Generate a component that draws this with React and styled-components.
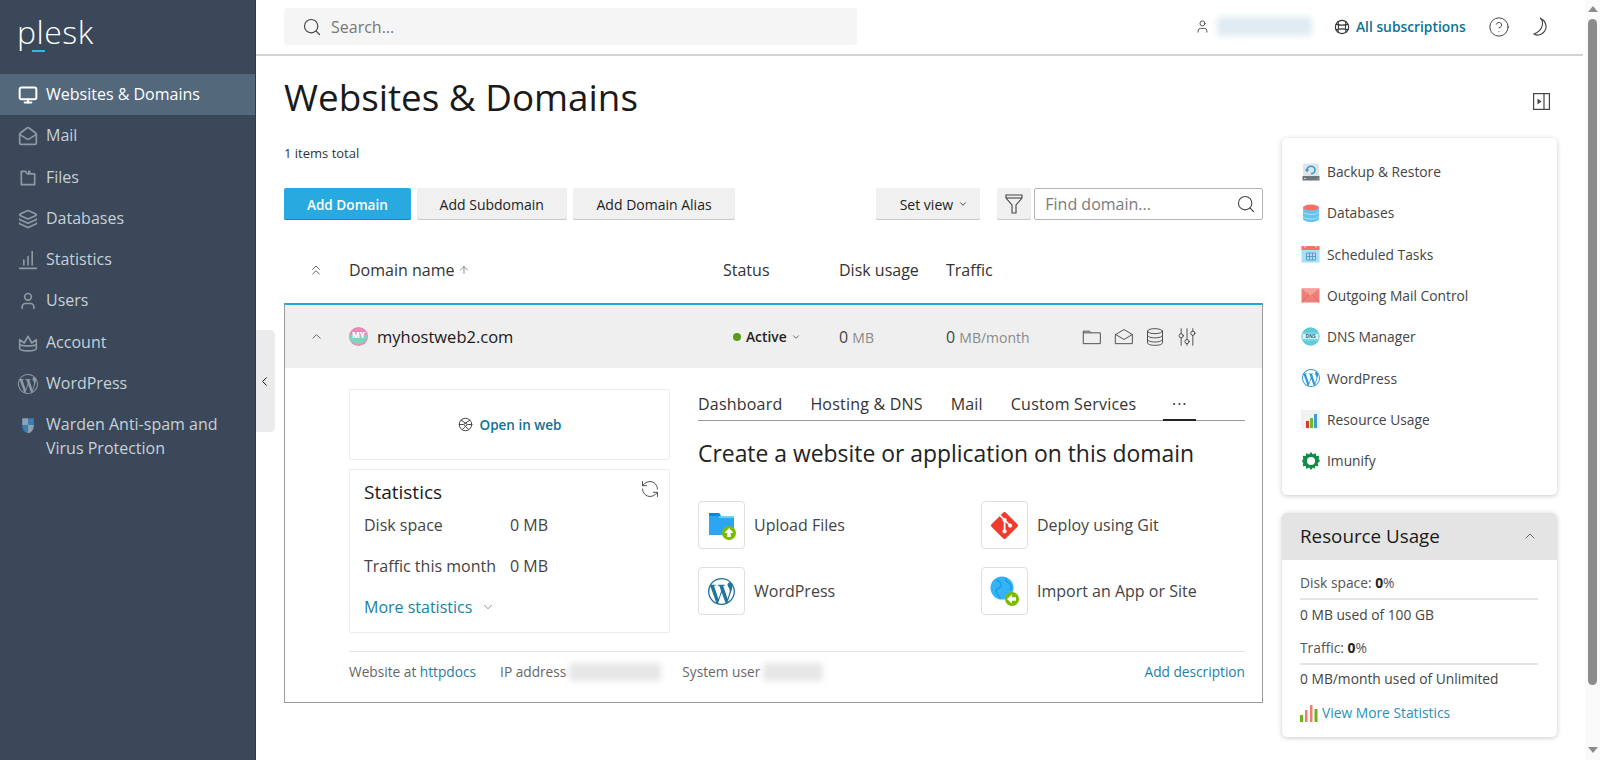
import React from 'react';
import styled, { createGlobalStyle } from 'styled-components';
import { Search, ChevronUp, ChevronDown, ChevronLeft, ChevronsUp, CircleHelp, Monitor, MailOpen, Layers, User, ArrowUp, RefreshCcw } from 'lucide-react';
import { SiGit, SiWordpress } from 'react-icons/si';

const GlobalStyle = createGlobalStyle`
  html, body { margin: 0; padding: 0; height: 100%; background: #fff; }
  body { font-family: "Open Sans", "Liberation Sans", sans-serif; color: #222; font-size: 14px; overflow: hidden; }
  * { box-sizing: border-box; }
`;

const Page = styled.div`
  display: flex;
  width: 1600px;
  height: 760px;
  position: relative;
`;

/* sidebar */
const Sidebar = styled.aside`
  width: 256px;
  flex: none;
  background: #3a4859;
  border-right: 1px solid #2f3b49;
`;

const LogoBox = styled.div`
  height: 74px;
  padding: 10px 0 0 17px;
`;

const Logo = styled.div`
  position: relative;
  display: inline-block;
  font-family: "Open Sans", sans-serif;
  font-weight: 300;
  font-size: 32px;
  line-height: 44px;
  letter-spacing: 0.5px;
  color: #fff;
  &::after {
    content: '';
    position: absolute;
    left: 15px;
    top: 40px;
    width: 13px;
    height: 2px;
    background: #35b6e0;
  }
`;

const NavItem = styled.div`
  display: flex;
  padding: 9px 12px 9px 18px;
  gap: 8px;
  font-size: 16px;
  line-height: 23.3px;
  color: ${p => (p.$active ? '#fff' : '#c8d0d8')};
  background: ${p => (p.$active ? '#54687c' : 'transparent')};
  font-weight: ${p => (p.$active ? 500 : 400)};
  svg { flex: none; margin-top: 2px; color: ${p => (p.$active ? '#fff' : '#8e99a5')}; }
`;

const Handle = styled.div`
  position: absolute;
  left: 256px;
  top: 330px;
  width: 19px;
  height: 102px;
  padding-right: 3px;
  background: #ebebeb;
  border-radius: 0 5px 5px 0;
  display: flex;
  align-items: center;
  justify-content: center;
  color: #111;
`;

/* main area */
const Main = styled.main`
  flex: 1;
  min-width: 0;
  display: flex;
  flex-direction: column;
`;

const TopBar = styled.header`
  height: 56px;
  flex: none;
  display: flex;
  align-items: center;
  padding: 0 0 1px 28px;
  margin-right: 2px;
  border-bottom: 2px solid #d2d2d2;
`;

const SearchBox = styled.div`
  width: 573px;
  height: 37px;
  background: #f5f5f5;
  border-radius: 4px;
  display: flex;
  align-items: center;
  gap: 9px;
  padding-left: 18px;
  color: #777;
  font-size: 16px;
  svg { color: #444; }
`;

const TopRight = styled.div`
  margin-left: 338px;
  display: flex;
  align-items: center;
  color: #333;
`;

const Redacted = styled.div`
  width: ${p => p.$w}px;
  height: ${p => p.$h || 20}px;
  margin-left: ${p => p.$ml || 0}px;
  margin-right: ${p => p.$mr || 0}px;
  background: ${p => p.$color};
  filter: blur(3px);
  border-radius: 3px;
`;

const SubscriptionsLink = styled.a`
  color: #0e7296;
  font-size: 13.8px;
  font-weight: 600;
  margin-left: 6px;
  margin-right: 22px;
`;

const MoonSlot = styled.span`
  margin-left: 20px;
  display: flex;
`;

const Content = styled.div`
  flex: 1;
  padding: 16px 28px 0 28px;
`;

const TitleRow = styled.div`
  display: flex;
  align-items: center;
  justify-content: space-between;
  height: 50px;
  padding-right: 7px;
  svg { margin-top: 8px; }
`;

const Title = styled.h1`
  margin: 0;
  font-size: 36.8px;
  font-weight: 400;
  line-height: 50px;
  color: #1a1a1a;
`;

const Columns = styled.div`
  display: flex;
  gap: 19px;
  margin-top: 16px;
`;

const LeftCol = styled.div`
  width: 979px;
  flex: none;
`;

const RightCol = styled.div`
  width: 275px;
  flex: none;
  display: flex;
  flex-direction: column;
  gap: 18px;
`;

const ItemsTotal = styled.div`
  font-size: 13px;
  line-height: 18px;
  margin-top: 6px;
  color: #333;
`;

const Toolbar = styled.div`
  display: flex;
  align-items: stretch;
  height: 32px;
  margin-top: 26px;
  gap: 6px;
`;

const Button = styled.button`
  font-family: inherit;
  font-size: ${p => (p.$primary ? 13.6 : 14)}px;
  font-weight: ${p => (p.$primary ? 600 : 500)};
  border: 0;
  border-radius: 2px;
  padding: 0 0 0 ${p => p.$pl || 0}px;
  width: ${p => p.$w}px;
  margin-left: ${p => p.$ml || 0}px;
  display: flex;
  align-items: center;
  justify-content: center;
  gap: 5px;
  background: ${p => (p.$primary ? '#28a9e0' : '#f0f0f0')};
  color: ${p => (p.$primary ? '#fff' : '#222')};
  box-shadow: inset 0 -1px 0 ${p => (p.$primary ? '#1b87b8' : '#c8c8c8')};
`;

const FindBox = styled.div`
  width: 229px;
  border: 1px solid #b4b4b4;
  border-radius: 2px;
  margin-left: -3px;
  display: flex;
  align-items: center;
  justify-content: space-between;
  padding: 0 6px 0 10px;
  color: #7b7b7b;
  font-size: 16px;
  svg { color: #444; }
`;

const TableHead = styled.div`
  display: grid;
  grid-template-columns: 65px 374px 116px 107px 136px 1fr;
  align-items: center;
  height: 83px;
  padding-top: 16px;
  font-size: 16px;
  color: #333;
`;

const HeadCell = styled.div`
  display: flex;
  align-items: center;
  gap: 4px;
  justify-content: ${p => (p.$center ? 'center' : 'flex-start')};
  padding-right: ${p => (p.$center ? 2 : 0)}px;
  color: #333;
  svg { color: #555; }
`;

const DomainBox = styled.section`
  border: 1px solid #9a9a9a;
  border-top: 2px solid #1ea7de;
  height: 400px;
`;

const DomainRow = styled.div`
  display: grid;
  grid-template-columns: 64px 374px 116px 107px 136px 1fr;
  align-items: center;
  height: 63px;
  background: #efefef;
`;

const DomainName = styled.div`
  display: flex;
  align-items: center;
  gap: 9px;
  font-size: 16.5px;
  font-weight: 500;
  color: #1a1a1a;
`;

const StatusCell = styled.div`
  display: flex;
  align-items: center;
  padding-left: 10px;
  font-size: 13.8px;
  font-weight: 600;
  color: #222;
  svg { margin-left: 4px; color: #555; }
`;

const Dot = styled.span`
  width: 8px;
  height: 8px;
  border-radius: 50%;
  background: #5b9a1c;
  margin-right: 5px;
`;

const Amount = styled.div`
  font-size: 16px;
  color: #444;
  small { font-size: 14px; color: #8a8a8a; }
`;

const RowIcons = styled.div`
  display: flex;
  gap: 11.6px;
  color: #444;
`;

const DomainBody = styled.div`
  padding: 21px 17px 0 64px;
`;

const BodyColumns = styled.div`
  display: grid;
  grid-template-columns: 321px 1fr;
  column-gap: 28px;
  height: 253px;
`;

const Stack = styled.div`
  display: flex;
  flex-direction: column;
  gap: 9px;
`;

const Card = styled.div`
  border: 1px solid #ececec;
  border-radius: 2px;
`;

const OpenCard = styled(Card)`
  height: 71px;
  display: flex;
  align-items: center;
  justify-content: center;
  gap: 7px;
  color: #444;
`;

const OpenLink = styled.a`
  color: #0e7296;
  font-size: 13.5px;
  font-weight: 600;
`;

const StatsCard = styled(Card)`
  position: relative;
  height: 164px;
  padding: 10px 14px;
`;

const StatsTitle = styled.div`
  font-size: 19px;
  font-weight: 500;
  line-height: 24px;
  color: #1a1a1a;
`;

const StatRow = styled.div`
  display: grid;
  grid-template-columns: 146px 1fr;
  font-size: 16px;
  line-height: 22px;
  margin-top: ${p => p.$mt}px;
  color: #444;
`;

const MoreLink = styled.a`
  display: flex;
  align-items: center;
  gap: 9px;
  margin-top: 19px;
  font-size: 16px;
  line-height: 22px;
  color: #1d7fa5;
  svg { color: #666; }
`;

const RefreshButton = styled.div`
  position: absolute;
  right: 9px;
  top: 9px;
  color: #444;
`;

const Tabs = styled.div`
  display: flex;
  height: 32px;
  border-bottom: 1px solid #999;
  font-size: 16px;
  color: #333;
`;

const Tab = styled.div`
  margin-right: ${p => p.$mr}px;
  width: ${p => (p.$w ? `${p.$w}px` : 'auto')};
  text-align: center;
  line-height: 20px;
  padding-top: 5px;
  letter-spacing: ${p => (p.$active ? '1px' : '0.2px')};
  border-bottom: ${p => (p.$active ? '2px solid #222' : '0')};
  height: ${p => (p.$active ? '32px' : 'auto')};
`;

const Heading = styled.h2`
  margin: 16px 0 0;
  font-size: 22.9px;
  line-height: 34px;
  font-weight: 400;
  color: #222;
`;

const ActionGrid = styled.div`
  display: grid;
  grid-template-columns: 283px 1fr;
  row-gap: 18px;
  margin-top: 30px;
`;

const Action = styled.div`
  display: flex;
  align-items: center;
  gap: 9px;
  font-size: 16px;
  color: #444;
`;

const ActionIcon = styled.div`
  width: 47px;
  height: 48px;
  border: 1px solid #dedede;
  border-radius: 4px;
  display: flex;
  align-items: center;
  justify-content: center;
`;

const MetaRow = styled.div`
  display: flex;
  align-items: center;
  height: 40px;
  border-top: 1px solid #e4e4e4;
  font-size: 13.7px;
  color: #666;
  margin-top: 9px;
`;

const MetaText = styled.span`
  margin-right: ${p => p.$mr || 0}px;
  a { color: #1d7fa5; }
`;

const DescLink = styled.a`
  margin-left: auto;
  color: #1d7fa5;
`;

/* right column */
const Panel = styled.div`
  background: #fff;
  border-radius: 5px;
  box-shadow: 0 1px 5px rgba(0, 0, 0, 0.22);
  overflow: hidden;
`;

const LinksPanel = styled(Panel)`
  height: 357px;
  padding: 13px 19px;
`;

const PanelLink = styled.div`
  display: flex;
  align-items: center;
  gap: 7px;
  height: 41.3px;
  font-size: 13.8px;
  color: #444;
`;

const PanelIconSlot = styled.span`
  width: 19px;
  display: flex;
  justify-content: center;
  flex: none;
`;

const PanelHead = styled.div`
  height: 47px;
  background: #e4e4e4;
  display: flex;
  align-items: center;
  justify-content: space-between;
  padding: 0 19px 1px 18px;
  font-size: 18.8px;
  font-weight: 500;
  color: #1a1a1a;
  svg { color: #555; }
`;

const UsageBody = styled.div`
  padding: 13px 19px 0 18px;
  height: 177px;
  font-size: 13.8px;
  color: #444;
`;

const UsageLabel = styled.div`
  line-height: 20px;
  padding-bottom: 5px;
  border-bottom: 2px solid #e4e4e4;
  margin-top: ${p => p.$mt || 0}px;
  color: #555;
  b { font-weight: 700; color: #222; }
`;

const UsageValue = styled.div`
  line-height: 20px;
  margin-top: ${p => p.$mt || 5}px;
`;

const StatsLink = styled.a`
  display: flex;
  align-items: center;
  gap: 4px;
  margin-top: 14px;
  line-height: 20px;
  color: #2a90ba;
`;

/* scrollbar */
const ScrollTrack = styled.div`
  width: 15px;
  flex: none;
  background: #fafafa;
  display: flex;
  flex-direction: column;
  align-items: center;
  padding: 6px 0;
`;

const ScrollArrow = styled.div`
  width: 0;
  height: 0;
  border-left: 5px solid transparent;
  border-right: 5px solid transparent;
  ${p => (p.$down ? 'border-top: 6px solid #8c8c8c;' : 'border-bottom: 6px solid #8c8c8c;')}
  ${p => (p.$down ? 'margin-top: auto; margin-bottom: 1px;' : '')}
`;

const ScrollThumb = styled.div`
  width: 9px;
  height: 666px;
  margin-top: 7px;
  border-radius: 5px;
  background: #8c8c8c;
`;

/* drawn icons */
const Line = ({ size = 18, sw = 1.3, children, fill = 'none' }) => (
  <svg width={size} height={size} viewBox="0 0 24 24" fill={fill} stroke="currentColor" strokeWidth={sw} strokeLinecap="round" strokeLinejoin="round">
    {children}
  </svg>
);

const FilesIcon = () => (
  <Line size={20} sw={2}>
    <path d="M4 4h5l2 3h2V4h1v3h6v13H4z" />
  </Line>
);

const StatsIcon = () => (
  <Line size={20} sw={2}>
    <path d="M2 22h20M7 18v-6M12 18V8M17 18V2" />
  </Line>
);

const CrownIcon = () => (
  <Line size={20} sw={2}>
    <path d="M2 8l5.500 4L12 4l4.500 8L22 8v10c0 2-4 3.500-10 3.500S2 20 2 18z" />
    <path d="M2 14c4 2 16 2 20 0" />
  </Line>
);

const ShieldIcon = () => (
  <svg width="20" height="20" viewBox="0 0 24 24">
    <path d="M5 4h7v8H5z" fill="#8fa2b4" />
    <path d="M12 4h7v8h-7z" fill="#3a7fb4" />
    <path d="M5 12h7v10c-4-1-7-4-7-10z" fill="#3a7fb4" />
    <path d="M12 12h7c0 6-3 9-7 10z" fill="#8fa2b4" />
  </svg>
);

const Globe = ({ size = 16 }) => (
  <Line size={size} sw={1.7}>
    <circle cx="12" cy="12" r="10" />
    <path d="M6 4c1 5 1 11 0 16M18 4c-1 5-1 11 0 16M3 8c6 1.500 12 1.500 18 0M3 16c6-1.500 12-1.500 18 0" />
  </Line>
);

const WebGlobe = () => (
  <Line size={15} sw={1.6}>
    <circle cx="12" cy="12" r="10" />
    <path d="M5 5l10 7-8 8M19 5L9 12l8 8M2 12h6M16 12h6" />
  </Line>
);

const Moon = () => (
  <svg width="18" height="20" viewBox="0 0 18 20" fill="none" stroke="#444" strokeWidth="1.1">
    <path d="M10 1c4 3 4 12-6 16 5 3 11-1 12-6 .5-4-2-8-6-10z" fill="#fff" />
  </svg>
);

const PanelToggle = () => (
  <svg width="17" height="17" viewBox="0 0 17 17" fill="none" stroke="#444" strokeWidth="1.2">
    <rect x="0.6" y="0.6" width="15.800" height="15.800" />
    <path d="M11 1v15" />
    <path d="M4.500 5.500l4 3-4 3z" fill="#444" stroke="none" />
  </svg>
);

const FunnelIcon = () => (
  <svg width="18" height="20" viewBox="0 0 18 20" fill="none" stroke="#444" strokeWidth="1.100">
    <path d="M1 1h16v3l-6 7v8H7v-8L1 4z" />
    <path d="M1 4h16" />
  </svg>
);

const FolderIcon = () => (
  <Line size={20} sw={1.1}>
    <path d="M2 5h7l2 2h11v13H2zM2 7h9" />
  </Line>
);

const OpenMailIcon = () => (
  <Line size={20} sw={1.100}>
    <path d="M2 9l10-6 10 6v11H2zM2 9l10 6 10-6" />
  </Line>
);

const DbIcon = () => (
  <Line size={20} sw={1.100}>
    <ellipse cx="12" cy="5" rx="9" ry="3" />
    <path d="M3 5v14c0 1.700 4 3 9 3s9-1.300 9-3V5M3 10c0 1.700 4 3 9 3s9-1.300 9-3M3 15c0 1.700 4 3 9 3s9-1.300 9-3" />
  </Line>
);

const SlidersIcon = () => (
  <Line size={20} sw={1.100}>
    <path d="M5 2v6M5 13v9M12 2v13M12 20v2M19 2v3M19 10v12" />
    <circle cx="5" cy="10.500" r="2.500" />
    <circle cx="12" cy="17.500" r="2.500" />
    <circle cx="19" cy="7.500" r="2.500" />
  </Line>
);

const Avatar = () => (
  <svg width="19" height="19" viewBox="0 0 19 19">
    <circle cx="9.500" cy="9.500" r="9.500" fill="#e58bb8" />
    <path d="M0.300 8h18.400A9.500 9.500 0 0 1 0.300 11z" fill="#7fd4bf" />
    <text x="9.500" y="11" textAnchor="middle" fontSize="8" fontWeight="800" fontFamily="Open Sans" fill="#fff">MY</text>
  </svg>
);

const BackupIcon = () => (
  <svg width="18" height="18" viewBox="0 0 18 18">
    <rect x="1" y="0.500" width="16" height="13" rx="1.500" fill="#dfe4e6" />
    <rect x="0.500" y="13" width="17" height="4.500" fill="#6d7678" />
    <rect x="2" y="15" width="2" height="1" fill="#d5dadb" />
    <rect x="15" y="15" width="1" height="1" fill="#8fd14f" />
    <path d="M5 7a4 3.800 0 1 1 4 3.800" fill="none" stroke="#2f9ad6" strokeWidth="1.600" />
    <path d="M2.800 6.500h4.500L5 9.200z" fill="#2f9ad6" />
  </svg>
);

const DatabaseColorIcon = () => (
  <svg width="18" height="18" viewBox="0 0 18 18">
    <path d="M1 3h16v12c0 1.500-3.500 3-8 3s-8-1.500-8-3z" fill="#66c3f0" />
    <path d="M1 7.500c0 1.500 3.500 3 8 3s8-1.500 8-3M1 12c0 1.500 3.500 3 8 3s8-1.500 8-3" fill="none" stroke="#c5e9fa" strokeWidth="0.800" />
    <ellipse cx="9" cy="3.500" rx="8" ry="3" fill="#fb6f68" />
  </svg>
);

const CalendarIcon = () => (
  <svg width="19" height="18" viewBox="0 0 19 18">
    <rect x="0.500" y="2" width="18" height="15.500" fill="#a6e0f8" />
    <rect x="0.500" y="1" width="18" height="4" fill="#fb6f68" />
    <path d="M4 0.500v2M15 0.500v2" stroke="#fff" strokeWidth="1" />
    <path d="M5.500 8h9v7h-9zM8.500 8v7M11.500 8v7M5.500 11.500h9" fill="none" stroke="#4d8fb8" strokeWidth="0.800" />
  </svg>
);

const EnvelopeIcon = () => (
  <svg width="19" height="15" viewBox="0 0 19 15">
    <rect x="0.500" y="0.500" width="18" height="14" fill="#ef8078" />
    <path d="M0.500 0.500l9 7 9-7z" fill="#f6a09a" />
    <path d="M0.500 14.500l7-8M18.500 14.500l-7-8" stroke="#d9635b" strokeWidth="0.700" fill="none" />
  </svg>
);

const DnsIcon = () => (
  <svg width="19" height="19" viewBox="0 0 19 19">
    <circle cx="9.500" cy="9.500" r="9.200" fill="#5fcbd8" />
    <path d="M1 6h17M1 13h17" stroke="#a8e6ee" strokeWidth="0.700" />
    <rect x="1.500" y="7" width="16" height="5" fill="#d8f3f7" />
    <text x="9.500" y="11.200" textAnchor="middle" fontSize="4.800" fontWeight="700" fontFamily="Open Sans" fill="#3a5a66">DNS</text>
  </svg>
);

const ResourceIcon = () => (
  <svg width="19" height="19" viewBox="0 0 19 19">
    <rect width="19" height="19" fill="#f1f1f1" />
    <rect x="5" y="11" width="3" height="7" fill="#d8372c" />
    <rect x="9" y="8" width="3" height="10" fill="#6fbb2a" />
    <rect x="13" y="4" width="3" height="14" fill="#3d9cd8" />
  </svg>
);

const ImunifyIcon = () => (
  <svg width="18" height="18" viewBox="0 0 18 18">
    <path d="M9 0l2 2.500 2.600-1.500.7 3 3-.3-.6 3L18 9l-2.300 2.300.6 3-3-.3-.7 3L11 15.500 9 18l-2-2.500L4.400 17l-.7-3-3 .3.6-3L0 9l1.300-2.300-.6-3 3 .3.7-3L7 2.500z" fill="#118a4a" />
    <circle cx="9" cy="9" r="4" fill="#fff" />
  </svg>
);

const FolderUpload = () => (
  <svg width="30" height="30" viewBox="0 0 30 30">
    <path d="M2 3h10l2 3h13v19H2z" fill="#2da5f5" />
    <path d="M2 3h10l2 3H2z" fill="#0d86e0" />
    <path d="M12 7h15" stroke="#cfeafc" strokeWidth="1" />
    <circle cx="22" cy="23" r="7" fill="#7cbb00" />
    <path d="M22 18l4.500 5h-2.800v4h-3.400v-4h-2.800z" fill="#fff" />
  </svg>
);

const GlobeImport = () => (
  <svg width="30" height="30" viewBox="0 0 30 30">
    <circle cx="12" cy="12" r="11.500" fill="#35b4f5" />
    <path d="M6 4c3 1 6 3 5 6s-5 2-5 5 3 5 4 7M16 2c-1 3 1 4 3 5s3 5 1 7" fill="none" stroke="#1e9ae6" strokeWidth="1.500" />
    <circle cx="22" cy="23" r="7" fill="#7cbb00" />
    <path d="M17 23l5-4.500v2.800h4v3.400h-4v2.800z" fill="#fff" />
  </svg>
);

const TinyBars = () => (
  <svg width="18" height="18" viewBox="0 0 18 18">
    <rect x="0" y="11" width="3" height="7" fill="#6fb01e" />
    <rect x="5" y="6" width="2.500" height="12" fill="#ef7d74" />
    <rect x="10" y="1" width="2.500" height="17" fill="#ef7d74" />
    <rect x="14.500" y="5" width="3" height="13" fill="#6fb01e" />
  </svg>
);

const navItems = [
  { label: 'Websites & Domains', icon: <Monitor size={20} strokeWidth={2.4} />, active: true },
  { label: 'Mail', icon: <MailOpen size={20} strokeWidth={2} /> },
  { label: 'Files', icon: <FilesIcon /> },
  { label: 'Databases', icon: <Layers size={20} strokeWidth={2} /> },
  { label: 'Statistics', icon: <StatsIcon /> },
  { label: 'Users', icon: <User size={20} strokeWidth={2} /> },
  { label: 'Account', icon: <CrownIcon /> },
  { label: 'WordPress', icon: <SiWordpress size={20} /> },
  { label: <>Warden Anti-spam and<br />Virus Protection</>, icon: <ShieldIcon /> },
];

const panelLinks = [
  { label: 'Backup & Restore', icon: <BackupIcon /> },
  { label: 'Databases', icon: <DatabaseColorIcon /> },
  { label: 'Scheduled Tasks', icon: <CalendarIcon /> },
  { label: 'Outgoing Mail Control', icon: <EnvelopeIcon /> },
  { label: 'DNS Manager', icon: <DnsIcon /> },
  { label: 'WordPress', icon: <SiWordpress size={18} color="#2f9ad6" /> },
  { label: 'Resource Usage', icon: <ResourceIcon /> },
  { label: 'Imunify', icon: <ImunifyIcon /> },
];

const App = () => (
  <Page>
    <GlobalStyle />
    <Sidebar>
      <LogoBox>
        <Logo>plesk</Logo>
      </LogoBox>
      {navItems.map((item, i) => (
        <NavItem key={i} $active={item.active}>
          {item.icon}
          <span>{item.label}</span>
        </NavItem>
      ))}
    </Sidebar>
    <Handle>
      <ChevronLeft size={15} strokeWidth={1.6} />
    </Handle>

    <Main>
      <TopBar>
        <SearchBox>
          <Search size={20} strokeWidth={1.4} />
          Search...
        </SearchBox>
        <TopRight>
          <User size={15} strokeWidth={1.3} />
          <Redacted $w={95} $h={19} $color="#dfebf1" $ml={7} $mr={22} />
          <Globe />
          <SubscriptionsLink>All subscriptions</SubscriptionsLink>
          <CircleHelp size={22} strokeWidth={1} />
          <MoonSlot><Moon /></MoonSlot>
        </TopRight>
      </TopBar>

      <Content>
        <TitleRow>
          <Title>Websites &amp; Domains</Title>
          <PanelToggle />
        </TitleRow>

        <Columns>
          <LeftCol>
            <ItemsTotal>1 items total</ItemsTotal>
            <Toolbar>
              <Button $primary $w={127}>Add Domain</Button>
              <Button $w={150}>Add Subdomain</Button>
              <Button $w={163}>Add Domain Alias</Button>
              <Button $w={104} $ml={135} $pl={11}>
                Set view <ChevronDown size={10} />
              </Button>
              <Button $w={34} $ml={11}><FunnelIcon /></Button>
              <FindBox>
                Find domain...
                <Search size={20} strokeWidth={1.300} />
              </FindBox>
            </Toolbar>

            <TableHead>
              <HeadCell $center><ChevronsUp size={16} strokeWidth={1.400} /></HeadCell>
              <HeadCell>Domain name <ArrowUp size={12} strokeWidth={1.300} /></HeadCell>
              <HeadCell>Status</HeadCell>
              <HeadCell>Disk usage</HeadCell>
              <HeadCell>Traffic</HeadCell>
            </TableHead>

            <DomainBox>
              <DomainRow>
                <HeadCell $center><ChevronUp size={15} strokeWidth={1.400} /></HeadCell>
                <DomainName><Avatar />myhostweb2.com</DomainName>
                <StatusCell><Dot />Active <ChevronDown size={10} /></StatusCell>
                <Amount>0 <small>MB</small></Amount>
                <Amount>0 <small>MB/month</small></Amount>
                <RowIcons>
                  <FolderIcon />
                  <OpenMailIcon />
                  <DbIcon />
                  <SlidersIcon />
                </RowIcons>
              </DomainRow>

              <DomainBody>
                <BodyColumns>
                  <Stack>
                    <OpenCard>
                      <WebGlobe />
                      <OpenLink>Open in web</OpenLink>
                    </OpenCard>
                    <StatsCard>
                      <RefreshButton><RefreshCcw size={20} strokeWidth={1.100} /></RefreshButton>
                      <StatsTitle>Statistics</StatsTitle>
                      <StatRow $mt={10}><span>Disk space</span><span>0 MB</span></StatRow>
                      <StatRow $mt={19}><span>Traffic this month</span><span>0 MB</span></StatRow>
                      <MoreLink>More statistics <ChevronDown size={14} strokeWidth={1.300} /></MoreLink>
                    </StatsCard>
                  </Stack>

                  <div>
                    <Tabs>
                      <Tab $mr={28}>Dashboard</Tab>
                      <Tab $mr={28}>Hosting &amp; DNS</Tab>
                      <Tab $mr={28}>Mail</Tab>
                      <Tab $mr={27}>Custom Services</Tab>
                      <Tab $active $w={33} $mr={0}>···</Tab>
                    </Tabs>
                    <Heading>Create a website or application on this domain</Heading>
                    <ActionGrid>
                      <Action><ActionIcon><FolderUpload /></ActionIcon>Upload Files</Action>
                      <Action><ActionIcon><SiGit size={27} color="#f03c2e" /></ActionIcon>Deploy using Git</Action>
                      <Action><ActionIcon><SiWordpress size={27} color="#21759b" /></ActionIcon>WordPress</Action>
                      <Action><ActionIcon><GlobeImport /></ActionIcon>Import an App or Site</Action>
                    </ActionGrid>
                  </div>
                </BodyColumns>

                <MetaRow>
                  <MetaText $mr={24}>Website at <a>httpdocs</a></MetaText>
                  <MetaText $mr={3}>IP address</MetaText>
                  <Redacted $w={92} $h={18} $color="#e6e6e6" $mr={21} />
                  <MetaText $mr={3}>System user</MetaText>
                  <Redacted $w={60} $h={18} $color="#e6e6e6" />
                  <DescLink>Add description</DescLink>
                </MetaRow>
              </DomainBody>
            </DomainBox>
          </LeftCol>

          <RightCol>
            <LinksPanel>
              {panelLinks.map(link => (
                <PanelLink key={link.label}>
                  <PanelIconSlot>{link.icon}</PanelIconSlot>
                  {link.label}
                </PanelLink>
              ))}
            </LinksPanel>

            <Panel>
              <PanelHead>
                Resource Usage
                <ChevronUp size={16} strokeWidth={1.300} />
              </PanelHead>
              <UsageBody>
                <UsageLabel>Disk space: <b>0</b>%</UsageLabel>
                <UsageValue>0 MB used of 100 GB</UsageValue>
                <UsageLabel $mt={13}>Traffic: <b>0</b>%</UsageLabel>
                <UsageValue $mt={4}>0 MB/month used of Unlimited</UsageValue>
                <StatsLink><TinyBars />View More Statistics</StatsLink>
              </UsageBody>
            </Panel>
          </RightCol>
        </Columns>
      </Content>
    </Main>

    <ScrollTrack>
      <ScrollArrow />
      <ScrollThumb />
      <ScrollArrow $down />
    </ScrollTrack>
  </Page>
);

export default App;
